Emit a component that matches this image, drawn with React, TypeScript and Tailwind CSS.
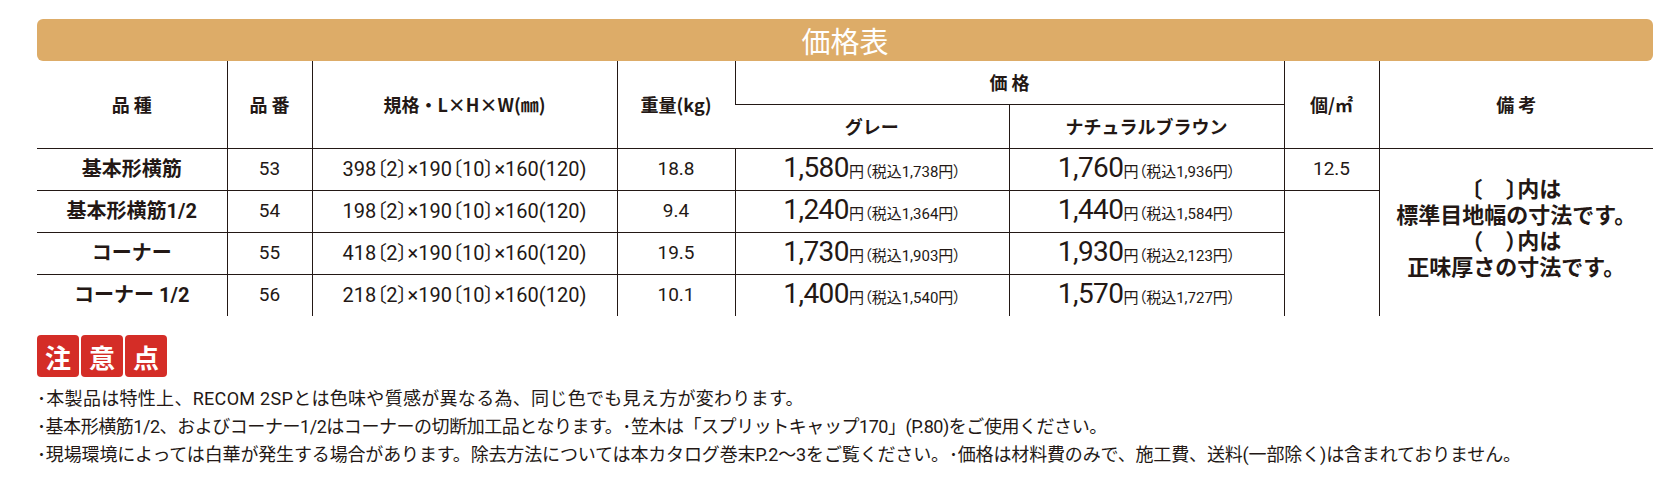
import React from "react";

const font = "font-['Roboto','Noto_Sans_CJK_JP',sans-serif]";
const jp = "font-['Noto_Sans_CJK_JP',sans-serif]";

interface Row {
  name: string;
  code: string;
  size: string;
  weight: string;
  gray: [string, string];
  brown: [string, string];
}

const rows: Row[] = [
  { name: "基本形横筋", code: "53", size: "398〔2〕×190〔10〕×160(120)", weight: "18.8", gray: ["1,580", "1,738"], brown: ["1,760", "1,936"] },
  { name: "基本形横筋1/2", code: "54", size: "198〔2〕×190〔10〕×160(120)", weight: "9.4", gray: ["1,240", "1,364"], brown: ["1,440", "1,584"] },
  { name: "コーナー", code: "55", size: "418〔2〕×190〔10〕×160(120)", weight: "19.5", gray: ["1,730", "1,903"], brown: ["1,930", "2,123"] },
  { name: "コーナー 1/2", code: "56", size: "218〔2〕×190〔10〕×160(120)", weight: "10.1", gray: ["1,400", "1,540"], brown: ["1,570", "1,727"] },
];

const notes: [string, string][] = [
  ["･本製品は特性上、RECOM 2SPとは色味や質感が異なる為、同じ色でも見え方が変わります。", "tracking-[0.3px]"],
  ["･基本形横筋1/2、およびコーナー1/2はコーナーの切断加工品となります。･笠木は「スプリットキャップ170」(P.80)をご使用ください。", "tracking-[-0.45px]"],
  ["･現場環境によっては白華が発生する場合があります。除去方法については本カタログ巻末P.2〜3をご覧ください。･価格は材料費のみで、施工費、送料(一部除く)は含まれておりません。", "tracking-[-0.15px]"],
];

const Price = ({ value, tax }: { value: string; tax: string }) => (
  <span className="inline-flex items-baseline whitespace-nowrap">
    <span className="text-[28px] leading-none tracking-[-0.5px]">{value}</span>
    <span className="text-[15px] leading-none">円</span>
    <span className="text-[15px] leading-none [font-feature-settings:'palt']">（税込{tax}円）</span>
  </span>
);

// empty bracket pair, e.g. 〔　〕
const Pair = ({ open, close }: { open: string; close: string }) => (
  <span className="[font-feature-settings:'palt']">
    {open}
    <span className="inline-block w-[24px]" />
    {close}
  </span>
);

const th = `border-[#231815] font-bold text-[18px] text-center align-middle p-0 ${jp}`;
const td = "border-[#231815] text-center align-middle h-[42px] p-0";

export default function App() {
  return (
    <div className={`w-[1670px] h-[490px] bg-white text-[#231815] ${font}`}>
      <div className="pt-[19px] pl-[37px]">
        <div className="w-[1616px] h-[42px] rounded-md bg-[#ddac68] flex items-center justify-center">
          <span className={`text-white text-[29px] leading-none ${jp}`}>価格表</span>
        </div>

        <table className="w-[1616px] border-collapse table-fixed">
          <colgroup>
            <col className="w-[190px]" />
            <col className="w-[85px]" />
            <col className="w-[305px]" />
            <col className="w-[118px]" />
            <col className="w-[274px]" />
            <col className="w-[275px]" />
            <col className="w-[95px]" />
            <col className="w-[274px]" />
          </colgroup>
          <thead>
            <tr className="h-[43px]">
              <th rowSpan={2} className={`${th} border-b`}>品 種</th>
              <th rowSpan={2} className={`${th} border-l border-b`}>品 番</th>
              <th rowSpan={2} className={`${th} border-l border-b`}>規格・L×H×W(㎜)</th>
              <th rowSpan={2} className={`${th} border-l border-b`}>重量(kg)</th>
              <th colSpan={2} className={`${th} border-l border-b`}>価 格</th>
              <th rowSpan={2} className={`${th} border-l border-b`}>個/㎡</th>
              <th rowSpan={2} className={`${th} border-l border-b`}>備 考</th>
            </tr>
            <tr className="h-[44px]">
              <th className={`${th} border-b`}>グレー</th>
              <th className={`${th} border-l border-b`}>ナチュラルブラウン</th>
            </tr>
          </thead>
          <tbody>
            {rows.map((r, i) => {
              const b = i === rows.length - 1 ? "" : "border-b";
              return (
                <tr key={r.code}>
                  <td className={`${td} ${b} font-bold text-[20px]`}>{r.name}</td>
                  <td className={`${td} ${b} border-l text-[19px]`}>{r.code}</td>
                  <td className={`${td} ${b} border-l text-[20px] whitespace-nowrap [font-feature-settings:'palt']`}>
                    {r.size}
                  </td>
                  <td className={`${td} ${b} border-l text-[19px]`}>{r.weight}</td>
                  <td className={`${td} ${b} border-l`}>
                    <Price value={r.gray[0]} tax={r.gray[1]} />
                  </td>
                  <td className={`${td} ${b} border-l`}>
                    <Price value={r.brown[0]} tax={r.brown[1]} />
                  </td>
                  {i === 0 && (
                    <>
                      <td className={`${td} border-l border-b text-[19px]`}>12.5</td>
                      <td rowSpan={4} className={`${td} border-l`}>
                        <div className="font-bold text-[22px] leading-[26px] pb-[6px]">
                          <div>
                            <Pair open="〔" close="〕" />内は
                          </div>
                          <div>標準目地幅の寸法です。</div>
                          <div>
                            <Pair open="（" close="）" />内は
                          </div>
                          <div>正味厚さの寸法です。</div>
                        </div>
                      </td>
                    </>
                  )}
                  {i === 1 && <td rowSpan={3} className={`${td} border-l`} />}
                </tr>
              );
            })}
          </tbody>
        </table>

        <div className="mt-[19px] flex gap-[2px]">
          {["注", "意", "点"].map((c) => (
            <div
              key={c}
              className={`w-[42px] h-[42px] rounded-[4px] bg-[#d42d27] text-white font-bold text-[26px] flex items-center justify-center ${jp}`}
            >
              {c}
            </div>
          ))}
        </div>

        <div className="mt-[8px] text-[18px] leading-[28px]">
          {notes.map(([n, t]) => (
            <p key={n} className={`whitespace-nowrap ${t}`}>{n}</p>
          ))}
        </div>
      </div>
    </div>
  );
}
